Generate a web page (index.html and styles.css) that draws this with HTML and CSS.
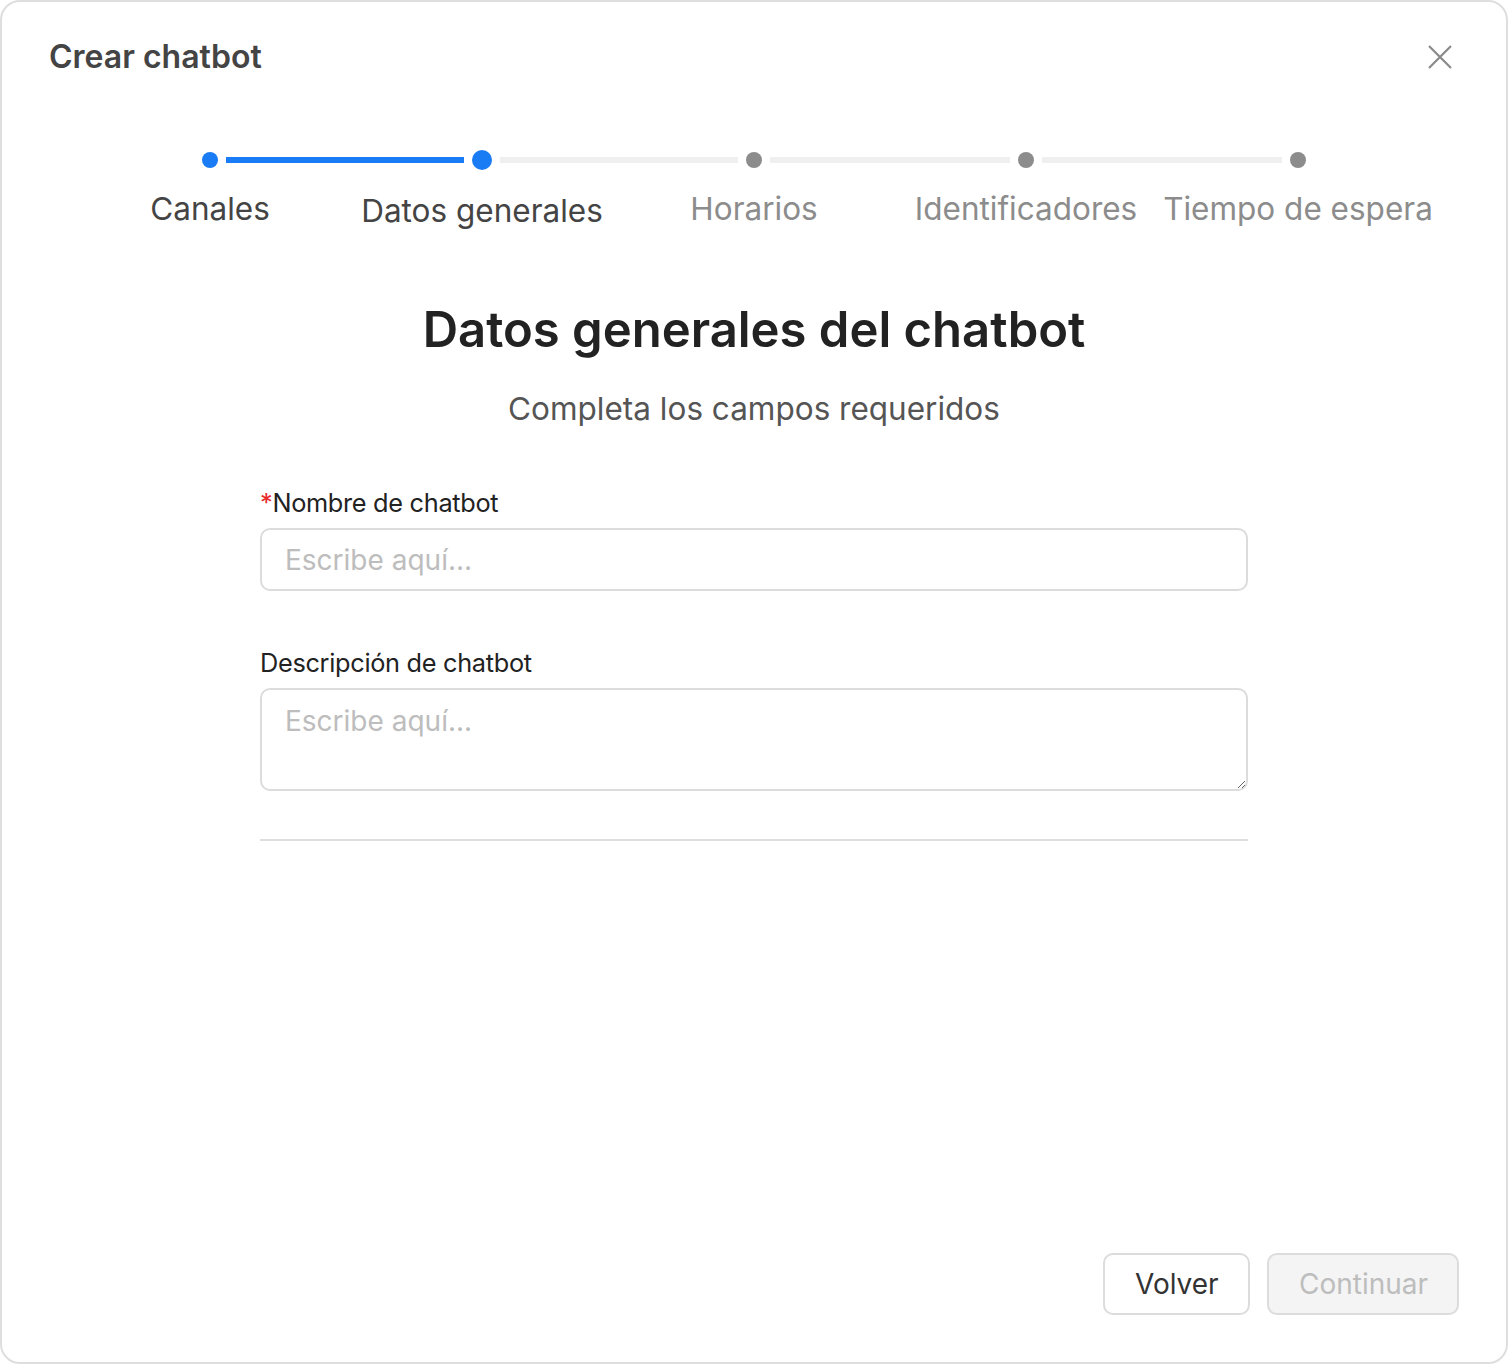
FILE: index.html
```html
<!DOCTYPE html>
<html lang="es">
<head>
<meta charset="utf-8">
<title>Crear chatbot</title>
<link rel="stylesheet" href="styles.css">
</head>
<body>
<div class="modal">
  <header class="modal-header">
    <h1 class="modal-title">Crear chatbot</h1>
    <button class="close-btn" aria-label="Cerrar">
      <svg width="24" height="24" viewBox="0 0 24 24"><path d="M1 1L23 23M23 1L1 23" stroke="#8a8a8a" stroke-width="2.2" fill="none"/></svg>
    </button>
  </header>

  <ol class="stepper">
    <li class="step done first">
      <div class="track"><span class="line left"></span><span class="dot"></span><span class="line right blue"></span></div>
      <span class="step-label">Canales</span>
    </li>
    <li class="step active">
      <div class="track"><span class="line left blue"></span><span class="dot"></span><span class="line right"></span></div>
      <span class="step-label">Datos generales</span>
    </li>
    <li class="step">
      <div class="track"><span class="line left"></span><span class="dot"></span><span class="line right"></span></div>
      <span class="step-label">Horarios</span>
    </li>
    <li class="step">
      <div class="track"><span class="line left"></span><span class="dot"></span><span class="line right"></span></div>
      <span class="step-label">Identificadores</span>
    </li>
    <li class="step last">
      <div class="track"><span class="line left"></span><span class="dot"></span><span class="line right"></span></div>
      <span class="step-label">Tiempo de espera</span>
    </li>
  </ol>

  <main class="content">
    <h2 class="section-title">Datos generales del chatbot</h2>
    <p class="section-subtitle">Completa los campos requeridos</p>

    <form class="form">
      <label class="field">
        <span class="field-label"><span class="req">*</span>Nombre de chatbot</span>
        <input class="input" type="text" placeholder="Escribe aquí...">
      </label>
      <label class="field">
        <span class="field-label">Descripción de chatbot</span>
        <textarea class="input textarea" placeholder="Escribe aquí..."></textarea>
      </label>
      <hr class="divider">
    </form>
  </main>

  <footer class="modal-footer">
    <button class="btn btn-secondary" type="button">Volver</button>
    <button class="btn btn-disabled" type="button" disabled>Continuar</button>
  </footer>
</div>
</body>
</html>
```

FILE: styles.css
```css
* { box-sizing: border-box; }

html, body {
  margin: 0;
  padding: 0;
  background: #ffffff;
}

body {
  font-family: Inter, "Noto Sans", "Liberation Sans", sans-serif;
  color: #333;
}

.modal {
  width: 1508px;
  height: 1364px;
  border: 2px solid #dedede;
  border-radius: 20px;
  background: #fff;
  display: flex;
  flex-direction: column;
}

.modal-header {
  display: flex;
  justify-content: space-between;
  align-items: center;
  padding: 37px 54px 0 47px;
}

.modal-title {
  margin: 0;
  font-size: 32px;
  line-height: 36px;
  font-weight: 600;
  color: #444;
}

.close-btn {
  border: 0;
  background: none;
  padding: 0;
  width: 24px;
  height: 24px;
  display: flex;
  cursor: pointer;
}

.stepper {
  list-style: none;
  margin: 75px auto 0;
  padding: 0;
  width: 1360px;
  display: grid;
  grid-template-columns: repeat(5, 1fr);
}

.step {
  display: flex;
  flex-direction: column;
  align-items: center;
}

.track {
  width: 100%;
  height: 20px;
  display: flex;
  align-items: center;
}

.line {
  flex: 1;
  height: 6px;
  background: #efefef;
}

.line.left { margin-right: 8px; }
.line.right { margin-left: 8px; }
.line.blue { background: #1a7cf5; }
.first .line.left,
.last .line.right { background: transparent; }

.dot {
  width: 16px;
  height: 16px;
  border-radius: 50%;
  background: #8c8c8c;
  flex: none;
}

.done .dot { background: #1a7cf5; }
.active .dot { width: 20px; height: 20px; background: #1a7cf5; }

.step-label {
  margin-top: 21px;
  font-size: 31.5px;
  line-height: 36px;
  color: #8c8c8c;
  white-space: nowrap;
}

.done .step-label { color: #444; }
.active .step-label { color: #444; margin-top: 23px; }

.content {
  width: 988px;
  margin: 0 auto;
  display: flex;
  flex-direction: column;
  align-items: center;
}

.section-title {
  margin: 72px 0 0;
  font-size: 49px;
  line-height: 58px;
  font-weight: 600;
  color: #222;
}

.section-subtitle {
  margin: 31px 0 0;
  font-size: 31.5px;
  line-height: 38px;
  color: #555;
}

.form {
  width: 100%;
  margin-top: 60px;
  display: flex;
  flex-direction: column;
}

.field {
  display: flex;
  flex-direction: column;
  margin-bottom: 57px;
}

.field + .field { margin-bottom: 48px; }

.field-label {
  font-size: 25.3px;
  line-height: 30px;
  color: #222;
  margin-bottom: 10px;
  letter-spacing: -0.3px;
}

.req { color: #e8282b; }

.input {
  width: 100%;
  height: 63px;
  border: 2px solid #dcdcdc;
  border-radius: 10px;
  padding: 0 23px;
  font-family: inherit;
  font-size: 28px;
  color: #333;
  background: #fff;
  outline: none;
}

.input::placeholder { color: #bdbdbd; }

.textarea {
  height: 103px;
  padding: 14px 23px;
  resize: vertical;
  line-height: 34px;
}

.divider {
  margin: 0;
  border: 0;
  height: 2px;
  background: #dedede;
}

.modal-footer {
  margin-top: auto;
  display: flex;
  justify-content: flex-end;
  gap: 17px;
  padding: 0 47px 47px 0;
}

.btn {
  height: 62px;
  border-radius: 10px;
  border: 2px solid #dcdcdc;
  font-family: inherit;
  font-size: 28px;
  padding: 0 30px;
  background: #fff;
  color: #333;
}

.btn-secondary { width: 147px; }

.btn-disabled {
  width: 192px;
  background: #f4f4f4;
  color: #bdbdbd;
}
```
